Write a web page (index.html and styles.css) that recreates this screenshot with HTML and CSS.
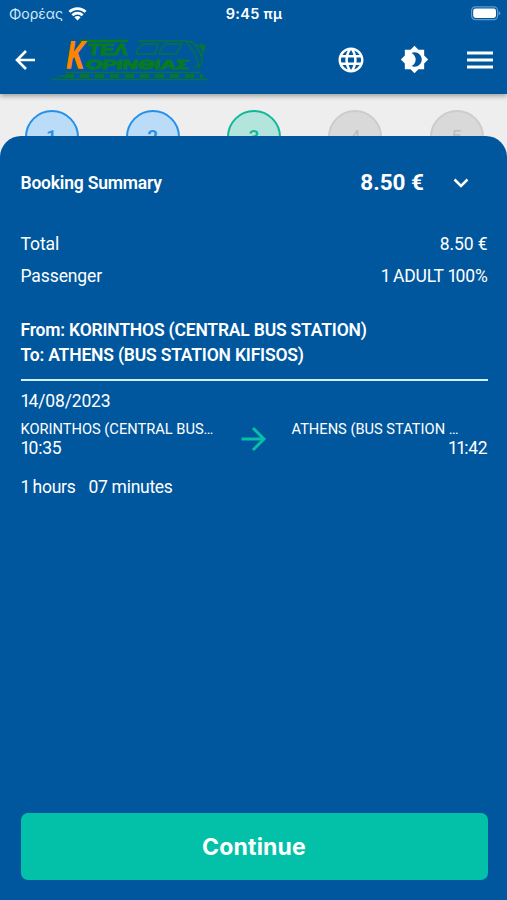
FILE: index.html
```html
<!DOCTYPE html>
<html lang="en">
<head>
<meta charset="utf-8">
<meta name="viewport" content="width=device-width, initial-scale=1">
<title>Booking Summary</title>
<link rel="stylesheet" href="styles.css">
</head>
<body>
<div class="app">
  <header class="top">
    <div class="status">
      <div class="carrier"><span>Φορέας</span>
        <svg width="19" height="15" viewBox="0 0 20 15" fill="none" stroke="#fff" stroke-width="2.9"><path d="M1.5 5.8a12 12 0 0 1 17 0M4.6 9.300a7.7 7.7 0 0 1 10.8 0"/><path d="M10 14.8 6.7 11.500a4.600 4.600 0 0 1 6.600 0z" fill="#fff" stroke="none"/></svg>
      </div>
      <span class="clock">9:45 πμ</span>
      <svg class="battery" width="32" height="15" viewBox="0 0 32 15"><rect x="2.600" y=".8" width="26" height="12.8" rx="3.8" fill="none" stroke="#5f9acb" stroke-width="1.2"/><rect x="4.200" y="2.4" width="22.800" height="9.6" rx="2.4" fill="#fff"/><path d="M29.6 5.2q1.8.4 1.8 2t-1.8 2z" fill="#5f9acb"/></svg>
    </div>
    <nav class="nav">
      <svg class="back" width="22" height="22" viewBox="0 0 22 22" fill="none" stroke="#fff" stroke-width="2.600"><path d="M21 11H3M12 2l-9 9 9 9"/></svg>
      <svg class="logo" width="160" height="44" viewBox="0 0 160 44">
        <g fill="none" stroke="#087340" stroke-width="1.400">
          <path d="M87 3h47q7 0 11 4.500h7M135 4q11 11 13 25M140 3q9 9 11 17M151 9v15l-5 8M149 26l-7 4"/>
          <path d="M92 6h15l-3 10H85q2-7 7-10zM115 6h16l-6 10h-17q2-7 7-10z"/>
          <path d="M15 34.500h134M8 38h14M0 41.500h157" stroke-width="1.500"/>
          <path d="M14 38h138" stroke-dasharray="9 6" stroke-width="4"/>
        </g>
        <path d="M150 5l5 3-2 6-5-5z" fill="#087340"/>
        <path d="M29 3h48" stroke="#087b22" stroke-width="2.500"/>
        <text class="logo-k" transform="translate(14.500 30) skewX(-9)" textLength="17" lengthAdjust="spacingAndGlyphs">K</text>
        <text class="logo-a" transform="translate(36 17) skewX(-8)" textLength="40" lengthAdjust="spacingAndGlyphs">ΤΕΛ</text>
        <text class="logo-b" transform="translate(34 30.500) skewX(-8)" textLength="103" lengthAdjust="spacingAndGlyphs">ΟΡΙΝΘΙΑΣ</text>
      </svg>
      <div class="tools">
        <svg width="30" height="30" viewBox="0 0 24 24" fill="#fff"><path d="M11.990 2C6.470 2 2 6.480 2 12s4.470 10 9.990 10C17.520 22 22 17.520 22 12S17.520 2 11.990 2zm6.930 6h-2.950a15.650 15.650 0 0 0-1.380-3.560A8.030 8.030 0 0 1 18.920 8zM12 4.040c.83 1.200 1.480 2.530 1.910 3.960h-3.820c.43-1.430 1.080-2.760 1.910-3.960zM4.260 14C4.100 13.360 4 12.690 4 12s.1-1.360.26-2h3.380c-.08.66-.14 1.320-.14 2s.06 1.340.14 2H4.260zm.82 2h2.950c.32 1.250.78 2.450 1.380 3.560A7.987 7.987 0 0 1 5.080 16zm2.950-8H5.080a7.987 7.987 0 0 1 4.330-3.560A15.650 15.650 0 0 0 8.030 8zM12 19.960c-.83-1.200-1.480-2.530-1.910-3.960h3.820c-.43 1.430-1.080 2.760-1.910 3.960zM14.340 14H9.660c-.09-.66-.16-1.320-.16-2s.07-1.350.16-2h4.680c.09.65.16 1.320.16 2s-.07 1.340-.16 2zm.25 5.560c.6-1.110 1.060-2.310 1.380-3.560h2.950a8.030 8.030 0 0 1-4.330 3.560zM16.360 14c.08-.66.14-1.320.14-2s-.06-1.340-.14-2h3.380c.16.640.26 1.310.26 2s-.1 1.360-.26 2h-3.380z"/></svg>
        <svg width="29" height="29" viewBox="0 0 24 24" fill="#fff"><path d="M20 8.690V4h-4.690L12 .69 8.690 4H4v4.690L.69 12 4 15.310V20h4.690L12 23.310 15.310 20H20v-4.690L23.310 12 20 8.690zM12 18c-.89 0-1.740-.2-2.500-.55C11.560 16.500 13 14.420 13 12s-1.440-4.500-3.500-5.450C10.260 6.200 11.110 6 12 6c3.310 0 6 2.690 6 6s-2.690 6-6 6z"/></svg>
        <svg width="26" height="20" viewBox="0 0 26 20" stroke="#fff" stroke-width="2.900"><path d="M0 3h26M0 10h26M0 17h26"/></svg>
      </div>
    </nav>
  </header>
  <div class="steps">
    <div class="step blue">1</div><i></i>
    <div class="step blue">2</div><i></i>
    <div class="step green">3</div><i class="active"></i>
    <div class="step">4</div><i></i>
    <div class="step">5</div>
  </div>
  <main class="sheet">
    <div class="head">
      <h1>Booking Summary</h1>
      <strong>8.50 €</strong>
      <svg width="16" height="10" viewBox="0 0 16 10" fill="none" stroke="#fff" stroke-width="2.500"><path d="m1.500 1.500 6.500 6.500 6.500-6.500"/></svg>
    </div>
    <div class="row"><span class="total">Total</span><span class="amount">8.50 €</span></div>
    <div class="row"><span class="passenger">Passenger</span><span class="adult"><b>1</b> ADULT <b>1</b>00%</span></div>
    <div class="route">
      <div class="from">From: KORINTHOS (CENTRAL BUS STATION)</div>
      <div class="to">To: ATHENS (BUS STATION KIFISOS)</div>
    </div>
    <div class="date"><b>1</b>4/08/2023</div>
    <div class="trip">
      <div class="stop"><span class="place origin">KORINTHOS (CENTRAL BUS…</span><span class="time"><b>1</b>0:35</span></div>
      <svg width="26" height="26" viewBox="0 0 26 26" fill="none" stroke="#04c1a8" stroke-width="2.900"><path d="M.5 13h22.500M12 2l11 11-11 11"/></svg>
      <div class="stop end"><span class="place dest">ATHENS (BUS STATION …</span><span class="time"><b>1</b><b>1</b>:42</span></div>
    </div>
    <div class="duration"><span><b>1</b> hours</span><span>07 minutes</span></div>
    <button class="continue">Continue</button>
  </main>
</div>
</body>
</html>
```
FILE: styles.css
```css
* { box-sizing: border-box; }
body { margin: 0; font-family: Roboto, "Liberation Sans", sans-serif; color: #fff; background: #00579e; }
.app { height: 900px; display: flex; flex-direction: column; overflow: hidden; background: #eee; }
.top { height: 94px; background: #00579e; box-shadow: 0 2px 5px rgba(0,0,0,.35); z-index: 1; flex: none; }
.status { height: 27px; display: grid; grid-template-columns: 1fr auto 1fr; align-items: center; padding: 0 6px 0 9px; font-family: Inter, sans-serif; }
.carrier { display: flex; align-items: center; gap: 5px; font-size: 14px; color: #d5e8f7; }
.clock { font-size: 14.500px; font-weight: 600; letter-spacing: .3px; margin-left: -2px; }
.battery { justify-self: end; margin-top: -1px; }
.nav { height: 65px; display: flex; align-items: center; padding: 0 14px 0 14px; }
.logo { margin: 0 0 0 15px; overflow: visible; }
.logo text { font-family: "Liberation Sans", sans-serif; font-weight: 700; }
.logo-k { font-size: 38px; fill: #ff8500; stroke: #ff8500; stroke-width: 1.500px; }
.logo-a { font-size: 16px; fill: #087b22; stroke: #087b22; stroke-width: 1px; }
.logo-b { font-size: 13px; fill: #087b22; stroke: #087b22; stroke-width: 1px; }
.tools { display: flex; align-items: center; margin-left: auto; }
.tools svg:nth-child(2) { margin: 0 38px 0 34.500px; }
.steps { flex: none; height: 70px; padding: 16px 23.500px 0 24.500px; display: flex; justify-content: space-between; align-items: flex-start; }
.step { width: 54px; height: 54px; flex: none; border: 2px solid #ccc; border-radius: 50%; background: #d9d9d9; color: #bdbdbd; font-size: 19px; line-height: 50px; text-align: center; }
.blue { background: #bbdcf8; border-color: #2490ea; color: #2490ea; font-weight: 600; }
.green { background: #b4e5dc; border-color: #10b897; color: #10b897; font-weight: 600; }
.steps i { height: 2px; width: 38px; margin-top: 25.500px; background: #ccc; }
.steps i.active { width: 22px; margin-right: 16px; background: #10b897; }
.sheet { position: relative; z-index: 2; flex: 1; margin-top: -28px; padding: 21px 19.500px 20px 20.500px; border-radius: 21px 21px 0 0; background: #00579e; display: flex; flex-direction: column; }
.head { height: 51px; display: flex; align-items: center; padding: 0 19px 0 0; margin-bottom: 20px; }
h1 { margin: 0 auto 0 0; font-size: 17.500px; font-weight: 600; letter-spacing: -.2px; }
.head strong { font-size: 22.500px; font-weight: 700; margin: -1px 28.500px 0 0; }
.row { height: 32px; line-height: 32px; display: flex; justify-content: space-between; font-size: 17.500px; letter-spacing: -.1px; }
.adult { letter-spacing: -.2px; }
b { font-weight: inherit; letter-spacing: -1.800px; }
.route { margin-top: 26px; padding-bottom: 11.500px; border-bottom: 2.500px solid #d4edff; font-size: 17.500px; font-weight: 600; letter-spacing: -.19px; line-height: 24.500px; white-space: nowrap; }
.date { margin-top: 9.500px; font-size: 17.500px; line-height: 22px; letter-spacing: -.15px; }
.trip { display: flex; justify-content: space-between; margin-top: 8.500px; }
.stop { width: 196px; display: flex; flex-direction: column; white-space: nowrap; }
.trip svg { margin: 5.500px 0 0 24px; }
.stop.end { margin-left: 25px; }
.end .time { align-self: flex-end; }
.place { font-size: 14.650px; line-height: 17px; }
.time { font-size: 17.500px; line-height: 21px; letter-spacing: -.2px; }
.duration { display: flex; gap: 13px; margin-top: 17px; font-size: 17.500px; line-height: 22px; letter-spacing: -.28px; }
.continue { height: 67px; flex: none; margin-top: auto; border: 0; border-radius: 7px; background: #03c1a8; color: #fff; font: 700 23px Inter, sans-serif; letter-spacing: .2px; }
```
